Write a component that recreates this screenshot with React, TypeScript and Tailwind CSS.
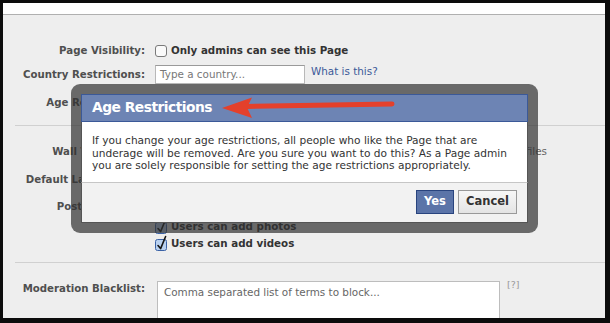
import React from "react";

function Box({ checked }: { checked?: boolean }) {
  if (checked) {
    return (
      <svg width="13" height="13" viewBox="0 0 13 13" className="shrink-0 overflow-visible">
        <rect x="0.5" y="1.5" width="11" height="11" rx="2" fill="#b9d1f0" stroke="#3b62a6" />
        <path d="M3 7.5 L5.6 10.6 L10.6 -1.5" fill="none" stroke="#151515" strokeWidth="1.6" strokeLinecap="round" strokeLinejoin="round" />
      </svg>
    );
  }
  return (
    <svg width="13" height="13" viewBox="0 0 13 13" className="shrink-0">
      <rect x="0.5" y="0.5" width="11" height="11" rx="2.5" fill="#fafafa" stroke="#7a7a7a" />
    </svg>
  );
}

function Label({ children }: { children: React.ReactNode }) {
  return (
    <div className="w-[142px] shrink-0 text-right text-[10.2px] font-bold leading-[16px] text-[#4f4f4f] whitespace-nowrap">
      {children}
    </div>
  );
}

export default function App() {
  return (
    <div className="relative w-[610px] h-[323px] bg-[#0c0c0c] pt-[3px] pl-[3px] pr-[5px] pb-[5px] font-['DejaVu_Sans',sans-serif] overflow-hidden">
      <div className="relative h-full bg-[#eeeeee] overflow-hidden">
        <div className="h-[12px] bg-white border-b border-[#b0b0b0]" />

        {/* Page visibility */}
        <div className="mt-[28px] h-[16px] flex items-center">
          <Label>Page Visibility:</Label>
          <div className="ml-[10px] flex items-center gap-[3px]">
            <Box />
            <span className="text-[10.3px] font-bold text-[#333] whitespace-nowrap">Only admins can see this Page</span>
          </div>
        </div>

        {/* Country */}
        <div className="mt-[6px] h-[19px] flex items-center">
          <Label>Country Restrictions:</Label>
          <div className="ml-[10px] w-[150px] h-[19px] bg-white border border-[#b8b8b8] border-t-[#9a9a9a] flex items-center pl-[4px] text-[10.4px] text-[#777] whitespace-nowrap">
            Type a country...
          </div>
          <span className="ml-[6px] self-start -mt-[1px] leading-[14px] text-[10.4px] text-[#3b5998] whitespace-nowrap">What is this?</span>
        </div>

        {/* Age */}
        <div className="mt-[11px] h-[16px] flex items-center">
          <Label>Age Restrictions:</Label>
          <div className="ml-[10px] text-[10.4px] text-[#333]">Anyone (13+)</div>
        </div>

        <div className="mt-[14px] ml-[12px] h-px bg-[#d0d0d0]" />

        {/* Wall */}
        <div className="mt-[18px] h-[16px] flex items-center">
          <Label>Wall Tab Shows:</Label>
          <div className="ml-[10px] w-[392px] text-right text-[10.4px] text-[#666] whitespace-nowrap">Posts by Page and by other profiles</div>
        </div>

        {/* Default landing */}
        <div className="mt-[12px] h-[16px] flex items-center">
          <Label>Default Landing Tab:</Label>
          <div className="ml-[10px] text-[10.4px] text-[#333]">Wall</div>
        </div>

        {/* Posting */}
        <div className="mt-[11px] h-[16px] flex items-center">
          <Label>Posting Ability:</Label>
          <div className="ml-[10px] flex items-center gap-[3px]">
            <Box checked />
            <span className="text-[10.3px] font-bold text-[#333] whitespace-nowrap">Users can write or post content on the wall</span>
          </div>
        </div>
        <div className="mt-[4px] h-[16px] flex items-center">
          <div className="w-[142px] shrink-0" />
          <div className="ml-[10px] flex items-center gap-[3px]">
            <Box checked />
            <span className="text-[10.3px] font-bold text-[#333] whitespace-nowrap">Users can add photos</span>
          </div>
        </div>
        <div className="mt-[1px] h-[16px] flex items-center">
          <div className="w-[142px] shrink-0" />
          <div className="ml-[10px] flex items-center gap-[3px]">
            <Box checked />
            <span className="text-[10.3px] font-bold text-[#333] whitespace-nowrap">Users can add videos</span>
          </div>
        </div>

        <div className="mt-[10px] ml-[12px] h-px bg-[#d0d0d0]" />

        {/* Moderation */}
        <div className="mt-[18px] flex items-start">
          <Label>Moderation Blacklist:</Label>
          <div className="ml-[12px] w-[343px] h-[50px] shrink-0 bg-white border border-[#bdbdbd] pl-[6px] pt-[3px] text-[10.4px] leading-[14px] text-[#666] whitespace-nowrap">
            Comma separated list of terms to block...
          </div>
          <span className="ml-[7px] -mt-[2px] text-[9.5px] leading-[12px] text-[#999]">[?]</span>
        </div>

        {/* Dialog overlay */}
        <div className="absolute left-[68px] top-[81px] w-[467px] h-[149px] rounded-[9px] bg-[rgba(48,48,48,0.7)] p-[10px]">
          <div className="flex flex-col h-full">
            <div className="h-[28px] shrink-0 bg-[#6d84b4] border border-[#3b5998] flex items-center pl-[10px]">
              <span className="text-[13.8px] font-bold tracking-[-0.5px] text-white leading-none">Age Restrictions</span>
            </div>
            <div className="h-[60px] shrink-0 bg-white border-x border-[#555] pl-[10px] pt-[12px] text-[10.6px] leading-[12.5px] text-[#333] whitespace-nowrap">
              If you change your age restrictions, all people who like the Page that are<br />
              underage will be removed. Are you sure you want to do this? As a Page admin<br />
              you are solely responsible for setting the age restrictions appropriately.
            </div>
            <div className="flex-1 bg-[#f2f2f2] border-t border-[#c6c6c6] border-x border-b border-x-[#555] border-b-[#555] flex justify-end items-start pt-[7px] pr-[10px] gap-[4px]">
              <div className="w-[38px] h-[24px] bg-[#5b74a8] border border-[#29447e] flex items-center justify-center text-[11.5px] font-bold text-white">Yes</div>
              <div className="w-[59px] h-[24px] bg-[linear-gradient(#f7f7f7,#e4e4e4)] border border-[#999] flex items-center justify-center text-[11.5px] font-bold text-[#333]">Cancel</div>
            </div>
          </div>
        </div>
      </div>

      {/* Red arrow annotation */}
      <svg className="absolute left-0 top-0 pointer-events-none" width="610" height="323" viewBox="0 0 610 323">
        <path d="M246 106.5 L392 104" stroke="#e4402b" strokeWidth="5" strokeLinecap="round" fill="none" />
        <path d="M222 108 L252 97.5 L247 107.5 L252 118 Z" fill="#e4402b" />
      </svg>
    </div>
  );
}
